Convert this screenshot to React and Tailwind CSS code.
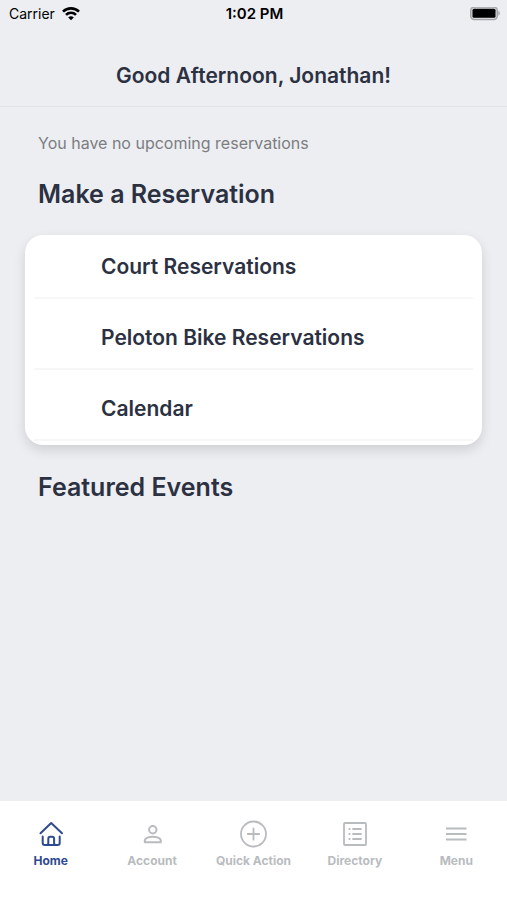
import React, { useState } from "react";

const reservationLinks = ["Court Reservations", "Peloton Bike Reservations", "Calendar"];

function HomeIcon() {
  return (
    <svg viewBox="0 0 28 28" className="size-7" fill="none" stroke="currentColor" strokeWidth="2" strokeLinecap="round" strokeLinejoin="round" aria-hidden="true">
      <path d="M3.500 13.300 14.200 3 25 13.300" />
      <path d="M5.700 16.500V23a2 2 0 0 0 2 2h13a2 2 0 0 0 2-2v-6.500" />
      <path d="M9.500 25a1.800 1.800 0 0 0 1.800-1.800v-4.400a2 2 0 0 1 2-2h1.800a2 2 0 0 1 2 2v4.400a1.800 1.800 0 0 0 1.800 1.800" />
    </svg>
  );
}

function AccountIcon() {
  return (
    <svg viewBox="0 0 28 28" className="size-7" fill="none" stroke="currentColor" strokeWidth="2" aria-hidden="true">
      <circle cx="14.800" cy="9.700" r="3.700" />
      <path d="M6.800 22.200v-1.500c0-2.700 4.500-4 8-4s8 1.300 8 4v1.500z" strokeLinejoin="round" />
    </svg>
  );
}

function QuickActionIcon() {
  return (
    <svg viewBox="0 0 28 28" className="size-7" fill="none" stroke="currentColor" strokeWidth="1.800" strokeLinecap="round" aria-hidden="true">
      <circle cx="14.500" cy="14" r="12.500" />
      <path d="M14.500 8.300v11.400M8.800 14h11.400" />
    </svg>
  );
}

function DirectoryIcon() {
  return (
    <svg viewBox="0 0 28 28" className="size-7" fill="none" stroke="currentColor" strokeWidth="1.800" strokeLinecap="round" aria-hidden="true">
      <rect x="3" y="3" width="22" height="22" rx="1" />
      <path d="M12 9h8M12 14h8M12 19h8M8.300 9h.4M8.300 14h.4M8.300 19h.4" />
    </svg>
  );
}

function MenuIcon() {
  return (
    <svg viewBox="0 0 28 28" className="size-7" fill="none" stroke="currentColor" strokeWidth="2.200" aria-hidden="true">
      <path d="M4 8.500h20.500M4 14h20.500M4 19.500h20.500" />
    </svg>
  );
}

const tabs = [
  { name: "Home", Icon: HomeIcon },
  { name: "Account", Icon: AccountIcon },
  { name: "Quick Action", Icon: QuickActionIcon },
  { name: "Directory", Icon: DirectoryIcon },
  { name: "Menu", Icon: MenuIcon },
];

function StatusBar() {
  return (
    <div className="grid grid-cols-3 items-center h-7 pl-[9px] pr-[7px] text-black">
      <div className="flex items-center gap-[7px] text-sm">
        <span>Carrier</span>
        <svg viewBox="0 0 18 14" className="w-[18px] h-3.5" fill="none" stroke="currentColor" strokeWidth="2.600" aria-hidden="true">
          <path d="M1 4.700a11.300 11.300 0 0 1 16 0" />
          <path d="M4 7.800a7 7 0 0 1 10 0" />
          <path d="M9 13.300 6.200 10.500a4 4 0 0 1 5.600 0z" fill="currentColor" stroke="none" />
        </svg>
      </div>
      <span className="text-center text-[15px] leading-5 font-semibold">1:02 PM</span>
      <svg viewBox="0 0 30 14" className="w-[30px] h-3.5 justify-self-end" aria-hidden="true">
        <rect x="0.700" y="0" width="26.600" height="12.600" rx="3.500" fill="#d5d6d9" stroke="#a4a5a8" strokeWidth="1.400" />
        <rect x="2.500" y="1.800" width="23" height="9" rx="1.500" fill="#000" />
        <path d="M28.300 3.800c2 .8 2 4.200 0 5z" fill="#a4a5a8" />
      </svg>
    </div>
  );
}

export default function App() {
  const [activeTab, setActiveTab] = useState("Home");

  return (
    <div className="min-h-screen flex flex-col bg-[#eceef2] font-['Inter',sans-serif] text-[#2c3142]">
      <StatusBar />

      <header className="pt-[33px] pb-[15px] border-b border-[#e2e4e7]">
        <h1 className="text-[21px] leading-[30px] font-semibold text-center">Good Afternoon, Jonathan!</h1>
      </header>

      <main className="flex-1 px-6 pt-6">
        <p className="px-3.5 text-base leading-6 text-[#7c7d80]">You have no upcoming reservations</p>

        <h2 className="px-3.5 mt-[21px] text-[25px] leading-9 font-semibold">Make a Reservation</h2>

        <ul className="flex flex-col gap-[7px] mt-[23px] mx-px px-[9px] pb-1 bg-white rounded-[18px] shadow-[0_5px_12px_rgba(0,0,0,0.13)]">
          {reservationLinks.map((label) => (
            <li key={label} className="border-b-2 border-[#f7f7f8]">
              <a href="#" className="block pl-[67px] pt-[18px] pb-4 text-[21px] leading-7 font-semibold">
                {label}
              </a>
            </li>
          ))}
        </ul>

        <h2 className="px-3.5 mt-6 text-[25px] leading-9 font-semibold">Featured Events</h2>
      </main>

      <nav className="grid grid-cols-5 pt-[19px] pb-[31px] bg-white">
        {tabs.map(({ name, Icon }) => (
          <button
            key={name}
            type="button"
            onClick={() => setActiveTab(name)}
            className={`flex flex-col items-center gap-[5px] text-xs font-bold whitespace-nowrap ${
              activeTab === name ? "text-[#2f4a8f]" : "text-[#b9bcbf]"
            }`}
          >
            <Icon />
            {name}
          </button>
        ))}
      </nav>
    </div>
  );
}
